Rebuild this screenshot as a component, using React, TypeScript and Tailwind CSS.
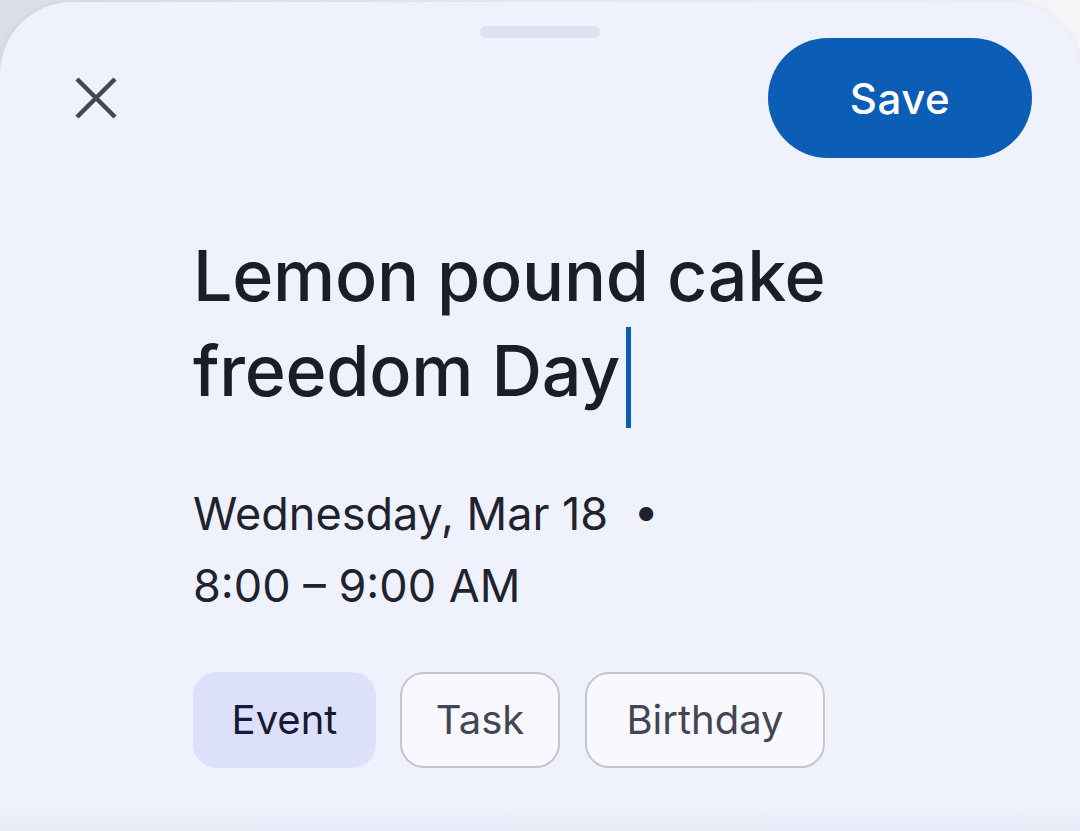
import React from "react";

export default function App() {
  const font = { fontFamily: "Inter, 'Noto Sans', sans-serif" };
  return (
    <div
      className="w-[1080px] h-[831px] overflow-hidden pt-[2px] bg-[linear-gradient(to_right,#dcdee6,#eceef3_50%,#f5f5f7)]"
      style={font}
    >
      <div className="h-[829px] rounded-t-[72px] bg-[linear-gradient(to_bottom,#eff1fd_97%,#e8eaf7)] shadow-[0_0_6px_rgba(0,0,0,0.08)] flex flex-col">
        <div className="mt-[24px] mx-auto w-[120px] h-[12px] rounded-full bg-[#dce0ef]" />
        <div className="flex items-center justify-between pl-[66px] pr-[48px]">
          <button className="w-[60px] h-[60px] flex items-center justify-center">
            <svg width="44" height="44" viewBox="0 0 44 44" fill="none">
              <path d="M3 3L41 41M41 3L3 41" stroke="#444750" strokeWidth="4.5" />
            </svg>
          </button>
          <button className="w-[264px] h-[120px] rounded-full bg-[#0b5db6] text-white text-[42px] font-medium tracking-[0.5px]">
            Save
          </button>
        </div>
        <div className="pl-[193px] pt-[70px]">
          <div className="text-[70px] leading-[95px] text-[#1b1e28] font-medium tracking-[-0.3px]">
            <div className="h-[95px]">Lemon pound cake</div>
            <div className="h-[95px] whitespace-nowrap">
              freedom Day
              <span className="inline-block align-top relative top-[4px] w-[5px] h-[101px] bg-[#0b5db6] ml-[6px]" />
            </div>
          </div>
          <div className="mt-[60px] text-[45px] leading-[72px] text-[#1f2330]">
            <div>Wednesday, Mar 18 &nbsp;•</div>
            <div>8:00 – 9:00 AM</div>
          </div>
          <div className="mt-[50px] flex">
            <div className="w-[183px] h-[96px] flex items-center justify-center rounded-[24px] bg-[#dde0fb] text-[40px] text-[#161a32]">
              Event
            </div>
            <div className="ml-[24px] w-[160px] h-[96px] flex items-center justify-center rounded-[24px] border-[2.5px] border-[#c4c7d0] bg-[#f8f8fe] text-[40px] text-[#424654]">
              Task
            </div>
            <div className="ml-[25px] w-[240px] h-[96px] flex items-center justify-center rounded-[24px] border-[2.5px] border-[#c4c7d0] bg-[#f8f8fe] text-[40px] text-[#424654]">
              Birthday
            </div>
          </div>
        </div>
      </div>
    </div>
  );
}
